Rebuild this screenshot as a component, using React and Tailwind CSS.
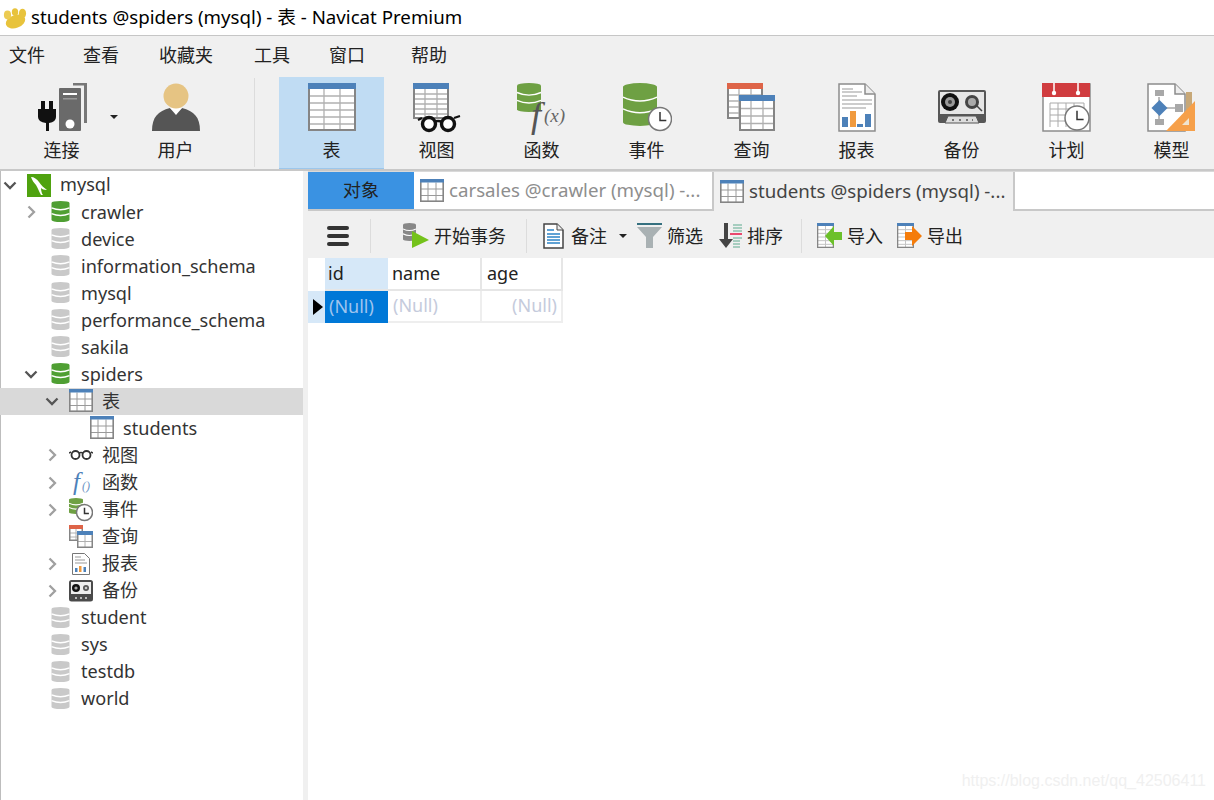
import React from "react";

const font = "font-['Noto_Sans','Noto_Sans_CJK_SC',sans-serif]";

// ---- icons ----
function Logo() {
  return (
    <svg width="25" height="22" viewBox="0 0 25 22">
      <ellipse cx="13.5" cy="14.5" rx="10" ry="6.5" fill="#e8c33c" transform="rotate(-20 13.5 14.5)" />
      <ellipse cx="5.5" cy="8" rx="3.6" ry="4.4" fill="#eccb52" />
      <ellipse cx="13" cy="5" rx="3.2" ry="3.8" fill="#e8c33c" />
      <ellipse cx="20.5" cy="6.5" rx="3.6" ry="4.8" fill="#e8c33c" />
    </svg>
  );
}

function TableGrid({ x = 0, y = 0, w = 48, h = 48, top = "#4d81b9", cols = 3, rows = 6, head = 5, line = "#b0b0b0", lw = 1.3, bw = 2 }) {
  const bodyTop = y + head + 1;
  const cells = [];
  for (let i = 1; i < cols; i++) {
    const lx = x + (w * i) / cols;
    cells.push(<line key={"c" + i} x1={lx} x2={lx} y1={bodyTop} y2={y + h} stroke={line} strokeWidth={lw} />);
  }
  for (let i = 1; i < rows; i++) {
    const ly = bodyTop + ((y + h - bodyTop) * i) / rows;
    cells.push(<line key={"r" + i} x1={x} x2={x + w} y1={ly} y2={ly} stroke={line} strokeWidth={lw} />);
  }
  return (
    <g>
      <rect x={x} y={y} width={w} height={h} fill="#fff" />
      {cells}
      <rect x={x + bw / 2} y={y + bw / 2} width={w - bw} height={h - bw} fill="none" stroke="#858585" strokeWidth={bw} />
      <rect x={x} y={y} width={w} height={head + 1} fill={top} />
    </g>
  );
}

function TableIcon() {
  return (
    <svg width="48" height="48" viewBox="0 0 48 48">
      <TableGrid head={5} />
    </svg>
  );
}

function ViewIcon() {
  return (
    <svg width="50" height="50" viewBox="0 0 50 50">
      <TableGrid x={1} w={36} h={36} />
      <path d="M6 37l4-2M42 35l6-2" stroke="#111" strokeWidth="2.2" fill="none" />
      <path d="M22 39q4-2 8 0" stroke="#111" strokeWidth="2.5" fill="none" />
      <circle cx="17" cy="41" r="6.5" fill="#fff" stroke="#111" strokeWidth="3.4" />
      <circle cx="36" cy="41" r="6.5" fill="#fff" stroke="#111" strokeWidth="3.4" />
    </svg>
  );
}

// stack of discs: one body with white curves between the bands
function Db({ x = 0, y = 0, w = 24, h = 28, color = "#6ea043", bands = 3, gap = 1.4 }) {
  const ry = Math.max(1.6, h * 0.09);
  const curves = [];
  for (let i = 1; i < bands; i++) {
    const by = y + ry + ((h - 2 * ry) * i) / bands - ry * 0.4;
    curves.push(
      <path key={i} d={`M${x} ${by}q${w / 2} ${ry * 2} ${w} 0`} fill="none" stroke="#fff" strokeWidth={gap} />
    );
  }
  return (
    <g>
      <path
        d={`M${x} ${y + ry}a${w / 2} ${ry} 0 0 1 ${w} 0v${h - 2 * ry}a${w / 2} ${ry} 0 0 1 -${w} 0z`}
        fill={color}
      />
      {curves}
    </g>
  );
}

function FuncIcon() {
  return (
    <svg width="50" height="50" viewBox="0 0 50 50" overflow="visible">
      <Db w={24} h={29} />
      <text x="14" y="44" fontFamily="Liberation Serif" fontStyle="italic" fontSize="36" fill="#555">f</text>
      <text x="27" y="39" fontFamily="Liberation Serif" fontStyle="italic" fontSize="19" fill="#666">(x)</text>
    </svg>
  );
}

function Clock({ cx, cy, r, sw = 1.5 }) {
  return (
    <g>
      <circle cx={cx} cy={cy} r={r} fill="#fff" stroke="#777" strokeWidth={sw} />
      <path d={`M${cx} ${cy - r * 0.6}V${cy + r * 0.12}H${cx + r * 0.55}`} fill="none" stroke="#333" strokeWidth={sw} />
    </g>
  );
}

function EventIcon() {
  return (
    <svg width="50" height="50" viewBox="0 0 50 50">
      <Db x={1} w={34} h={43} />
      <Clock cx={38} cy={36} r={11.5} />
    </svg>
  );
}

function QueryIcon() {
  return (
    <svg width="50" height="50" viewBox="0 0 50 50">
      <TableGrid w={36} h={36} top="#de6448" rows={5} />
      <TableGrid x={12} y={12} w={36} h={36} rows={4} />
    </svg>
  );
}

function ReportIcon() {
  return (
    <svg width="38" height="50" viewBox="0 0 38 50">
      <path d="M1 1h26l10 10v37H1z" fill="#fff" stroke="#8c8c8c" strokeWidth="1.5" />
      <path d="M27 1v10h10" fill="#eee" stroke="#8c8c8c" strokeWidth="1.5" />
      <path d="M4 6h11M4 9h20M4 13h15M4 17h30M4 21h30M4 25h24" stroke="#999" strokeWidth="1" />
      <rect x="4" y="34" width="6" height="10" fill="#4d81b9" />
      <rect x="12" y="28" width="6" height="16" fill="#f09a3e" />
      <rect x="19" y="41" width="6" height="3" fill="#4d81b9" />
      <rect x="27" y="31" width="6" height="13" fill="#4d81b9" />
    </svg>
  );
}

function BackupIcon() {
  return (
    <svg width="48" height="50" viewBox="0 0 48 50">
      <g transform="translate(0 7)">
        <rect x="0" y="0" width="48" height="33" rx="2" fill="#575757" />
        <rect x="2" y="2" width="44" height="22" fill="#e6e6e6" />
        <circle cx="12" cy="12" r="9" fill="#111" />
        <circle cx="12" cy="12" r="5" fill="#999" />
        <circle cx="12" cy="12" r="2" fill="#444" />
        <circle cx="34" cy="12" r="7" fill="#444" />
        <circle cx="34" cy="12" r="4" fill="#aaa" />
        <path d="M39 16l5 5" stroke="#444" strokeWidth="1.5" />
        <path d="M7 33l3-7h28l3 7z" fill="#ddd" stroke="#555" />
        <path d="M14 30h2M21 30h2M28 30h2M34 30h1" stroke="#555" strokeWidth="1.5" />
      </g>
    </svg>
  );
}

function BackupSmall() {
  return (
    <svg width="24" height="22" viewBox="0 0 24 22">
      <rect width="24" height="21.5" rx="2.5" fill="#4a4a4a" />
      <rect x="2" y="2" width="20" height="12" fill="#eee" />
      <circle cx="7" cy="8" r="4" fill="#111" />
      <circle cx="7" cy="8" r="1.6" fill="#aaa" />
      <circle cx="17" cy="8" r="3" fill="#555" />
      <circle cx="17" cy="8" r="1.3" fill="#ccc" />
      <path d="M6 18h2M11 18h2M16 18h2" stroke="#ddd" strokeWidth="1.4" />
    </svg>
  );
}

function ScheduleIcon() {
  return (
    <svg width="50" height="50" viewBox="0 0 50 50">
      <rect x="1" y="1" width="47" height="47" fill="#fff" stroke="#8c8c8c" strokeWidth="1.5" />
      <rect x="0" y="0" width="48" height="14" fill="#d03c3f" />
      <path d="M12 0v10M36 0v10" stroke="#fff" strokeWidth="1.5" />
      <circle cx="12" cy="10" r="2.2" fill="#fff" />
      <circle cx="36" cy="10" r="2.2" fill="#fff" />
      <path d="M8 20h34M8 26h34M8 32h34M8 38h34M8 20v24M16 20v24M24 20v24M32 20v24M42 20v14" stroke="#aaa" strokeWidth="1" />
      <Clock cx={35} cy={35} r={12} />
    </svg>
  );
}

function ModelIcon() {
  return (
    <svg width="50" height="50" viewBox="0 0 50 50">
      <path d="M1 1h27l10 10v37H1z" fill="#fff" stroke="#8c8c8c" strokeWidth="1.5" />
      <path d="M28 1v10h10" fill="#eee" stroke="#8c8c8c" strokeWidth="1.5" />
      <rect x="39" y="9" width="6" height="24" fill="#c7a878" />
      <path d="M12 14v24M18 25h12" stroke="#a8a8a8" strokeWidth="1.5" />
      <rect x="8" y="7" width="9" height="6" fill="#a8a8a8" />
      <rect x="8" y="36" width="9" height="6" fill="#a8a8a8" />
      <rect x="28" y="21" width="8" height="8" fill="#a8a8a8" />
      <path d="M12.5 17l8 8-8 8-8-8z" fill="#4d81b9" />
      <path d="M48 18v30H19z" fill="#f6a04a" />
      <path d="M42 35v7h-7z" fill="#f0e4cf" />
    </svg>
  );
}

function PlugServerIcon() {
  return (
    <svg width="50" height="50" viewBox="0 0 50 50">
      <path d="M36 0h14v40h-3V2.5H36z" fill="#777" />
      <rect x="22" y="5" width="22" height="43" rx="1" fill="#6a6a6a" />
      <rect x="26" y="10" width="14" height="2" fill="#fff" />
      <rect x="26" y="15" width="14" height="1.5" fill="#999" />
      <circle cx="33" cy="41" r="4.5" fill="#fff" />
      <path d="M4 18h4v8h4v-8h4v8h3v8q0 5-7 6v8h-3v-8q-8-1-8-6v-8h3z" fill="#111" />
    </svg>
  );
}

function UserIcon() {
  return (
    <svg width="50" height="50" viewBox="0 0 50 50">
      <path d="M1 48c0-14 6-20 18-23l6 5 6-5c12 3 18 9 18 23z" fill="#555" />
      <path d="M19 25h12l-6 7z" fill="#fff" />
      <circle cx="25" cy="13" r="12.5" fill="#e6c483" />
    </svg>
  );
}

function Chevron({ open, dark }) {
  return (
    <svg width="14" height="14" viewBox="0 0 14 14">
      <path
        d={open ? "M1.5 4.5l5.5 5.5 5.5-5.5" : "M4.5 1.5l5.5 5.5-5.5 5.5"}
        fill="none"
        stroke={dark ? "#555" : "#a0a0a0"}
        strokeWidth="2.3"
      />
    </svg>
  );
}

function DbSmall({ on }) {
  return (
    <svg width="19" height="22" viewBox="0 0 19 22">
      <Db w={18} h={21} x={0.5} color={on ? "#4f9f33" : "#c9c9c9"} gap={1.5} />
    </svg>
  );
}

function MysqlIcon() {
  return (
    <svg width="24" height="23" viewBox="0 0 24 23">
      <rect width="24" height="23" fill="#4fa20f" />
      <path d="M4 3c3 0 6 2 8 5 2 3 5 6 8 8-3 0-5-1-6-2 0 3 1 6 2 7h-2c-2-3-3-7-5-10-2-2-4-5-5-8z" fill="#fff" />
    </svg>
  );
}

function TableSmall() {
  return (
    <svg width="24" height="24" viewBox="0 0 24 24">
      <TableGrid w={24} h={23} head={2.5} rows={3} cols={3} line="#9a9a9a" lw={1} bw={1.6} top="#4d81b9" />
    </svg>
  );
}

function GlassesSmall() {
  return (
    <svg width="24" height="12" viewBox="0 0 24 12">
      <path d="M0 4l2-1M22 3l2 1M10 4q2-1 4 0" stroke="#333" strokeWidth="1.5" fill="none" />
      <circle cx="6.5" cy="6" r="4" fill="#fff" stroke="#333" strokeWidth="1.8" />
      <circle cx="17.5" cy="6" r="4" fill="#fff" stroke="#333" strokeWidth="1.8" />
    </svg>
  );
}

function FuncSmall() {
  return (
    <svg width="24" height="26" viewBox="0 0 24 26" overflow="visible">
      <text x="4" y="20" fontFamily="Liberation Serif" fontStyle="italic" fontSize="25" fill="#4d81b9">f</text>
      <text x="13" y="20" fontFamily="Liberation Serif" fontStyle="italic" fontSize="12" fill="#6a94c4">()</text>
    </svg>
  );
}

function EventSmall() {
  return (
    <svg width="24" height="24" viewBox="0 0 24 24">
      <Db w={14} h={16} x={0} color="#6ea043" gap={1.1} />
      <Clock cx={15.5} cy={14.5} r={8} sw={1.5} />
    </svg>
  );
}

function QuerySmall() {
  return (
    <svg width="24" height="24" viewBox="0 0 24 24">
      <TableGrid w={14} h={16} top="#de6448" cols={2} rows={3} head={3} lw={1} bw={1.5} />
      <TableGrid x={8} y={6} w={16} h={17} cols={2} rows={2} head={3} lw={1} bw={1.5} />
    </svg>
  );
}

function ReportSmall() {
  return (
    <svg width="24" height="22" viewBox="0 0 24 22">
      <path d="M3.5.5h12l5 5v16h-17z" fill="#fff" stroke="#777" />
      <path d="M6 4h6M6 7h10M6 10h12" stroke="#999" />
      <rect x="6" y="15" width="2.5" height="4" fill="#4d81b9" />
      <rect x="10" y="13" width="2.5" height="6" fill="#f09a3e" />
      <rect x="14.5" y="14" width="2.5" height="5" fill="#4d81b9" />
    </svg>
  );
}

function BookIcon() {
  return (
    <svg width="21" height="26" viewBox="0 0 21 26">
      <path d="M1 1h13l6 6v18H1z" fill="#fff" stroke="#444" strokeWidth="1.5" />
      <path d="M14 1v6h6" fill="#eee" stroke="#444" />
      <path d="M4 7h7M4 11h13M4 14h13M4 17h13M4 20h13" stroke="#2c84c6" strokeWidth="1.5" />
    </svg>
  );
}

function FilterIcon() {
  return (
    <svg width="26" height="26" viewBox="0 0 26 26">
      <rect x="0" y="0" width="25" height="2" fill="#35707f" />
      <path d="M0 4h25l-9 10v11h-7V14z" fill="#a9b1b3" />
    </svg>
  );
}

function SortIcon() {
  return (
    <svg width="25" height="26" viewBox="0 0 25 26">
      <path d="M6 0h4v16h5l-7 9-7-9h5z" fill="#444" />
      <path d="M15 2h9M15 5h9M15 8h9M15 15h9M15 18h7M15 21h7M15 24h7" stroke="#8dc1ae" strokeWidth="1.3" />
      <path d="M12 11h12" stroke="#e8375f" strokeWidth="1.8" />
    </svg>
  );
}

function TxIcon() {
  return (
    <svg width="26" height="26" viewBox="0 0 26 26">
      <Db w={13} h={18} x={0} color="#888" gap={1.1} />
      <path d="M9 8l17 9-17 8z" fill="#74c21b" />
    </svg>
  );
}

function TransferIcon({ color, left }) {
  return (
    <svg width="26" height="26" viewBox="0 0 26 26">
      <TableGrid w={17} h={25} cols={2} rows={6} head={2} line="#c4c4c4" lw={1} bw={1.3} />
      <path
        d={left ? "M25 9h-8V3L8 13l9 10v-6h8z" : "M8 9h7V3l10 10-10 10v-6H8z"}
        fill={color}
      />
    </svg>
  );
}

// ---- data ----
const menus = [
  ["文件", "w-[74px]"],
  ["查看", "w-[76px]"],
  ["收藏夹", "w-[95px]"],
  ["工具", "w-[75px]"],
  ["窗口", "w-[82px]"],
  ["帮助", "w-[60px]"],
];

const tools = [
  ["表", <TableIcon />, true],
  ["视图", <ViewIcon />],
  ["函数", <FuncIcon />],
  ["事件", <EventIcon />],
  ["查询", <QueryIcon />],
  ["报表", <ReportIcon />],
  ["备份", <BackupIcon />],
  ["计划", <ScheduleIcon />],
  ["模型", <ModelIcon />],
];

const indent = ["pl-0", "pl-[21px]", "pl-[42px]", "pl-[63px]"];

const tree = [
  { t: "mysql", l: 0, c: "open", i: <MysqlIcon /> },
  { t: "crawler", l: 1, c: "closed", i: <DbSmall on /> },
  { t: "device", l: 1, i: <DbSmall /> },
  { t: "information_schema", l: 1, i: <DbSmall /> },
  { t: "mysql", l: 1, i: <DbSmall /> },
  { t: "performance_schema", l: 1, i: <DbSmall /> },
  { t: "sakila", l: 1, i: <DbSmall /> },
  { t: "spiders", l: 1, c: "open", i: <DbSmall on /> },
  { t: "表", l: 2, c: "open", i: <TableSmall />, sel: true },
  { t: "students", l: 3, i: <TableSmall /> },
  { t: "视图", l: 2, c: "closed", i: <GlassesSmall /> },
  { t: "函数", l: 2, c: "closed", i: <FuncSmall /> },
  { t: "事件", l: 2, c: "closed", i: <EventSmall /> },
  { t: "查询", l: 2, i: <QuerySmall /> },
  { t: "报表", l: 2, c: "closed", i: <ReportSmall /> },
  { t: "备份", l: 2, c: "closed", i: <BackupSmall /> },
  { t: "student", l: 1, i: <DbSmall /> },
  { t: "sys", l: 1, i: <DbSmall /> },
  { t: "testdb", l: 1, i: <DbSmall /> },
  { t: "world", l: 1, i: <DbSmall /> },
];

function ToolButton({ label, icon, active }) {
  return (
    <div
      className={
        "w-[105px] h-[92px] flex flex-col items-center shrink-0 " +
        (active ? "bg-[#c0dcf3] border-b border-[#9cc7ec]" : "")
      }
    >
      <div className="h-[52px] mt-[6px] flex items-start justify-center">{icon}</div>
      <span className="text-[18px] leading-6 mt-[3px] text-[#222]">{label}</span>
    </div>
  );
}

function ObjAction({ icon, label, className }) {
  return (
    <div className={"flex items-center shrink-0 " + className}>
      {icon}
      <span className="text-[18px] text-[#222] leading-6">{label}</span>
    </div>
  );
}

export default function App() {
  return (
    <div className={"h-[800px] w-full overflow-hidden bg-white flex flex-col relative " + font}>
      {/* title bar */}
      <div className="h-[35px] shrink-0 flex items-center pl-[2px]">
        <Logo />
        <span className="ml-[4px] text-[18.7px] text-black whitespace-nowrap">
          students @spiders (mysql) - 表 - Navicat Premium
        </span>
      </div>

      {/* menu */}
      <div className="h-[35px] shrink-0 bg-[#f0f0f0] border-t border-[#c6c6c6] flex items-center pl-[9px] pt-[5px]">
        {menus.map(([m, w]) => (
          <span key={m} className={"text-[18px] text-[#222] " + w}>
            {m}
          </span>
        ))}
      </div>

      {/* toolbar */}
      <div className="h-[101px] shrink-0 bg-[#f0f0f0] border-b-2 border-[#c8c8c8] flex pt-[7px]">
        <div className="w-[123px] shrink-0 flex relative">
          <div className="ml-[9px] w-[105px] h-[92px] flex flex-col items-center">
            <div className="h-[52px] mt-[6px]">
              <PlugServerIcon />
            </div>
            <span className="text-[18px] leading-6 mt-[3px] text-[#222]">连接</span>
          </div>
          <span className="absolute left-[110px] top-[38px] w-0 h-0 border-x-4 border-x-transparent border-t-4 border-t-[#222]" />
        </div>
        <div className="w-[105px] shrink-0 h-[92px] flex flex-col items-center">
          <div className="h-[52px] mt-[6px]">
            <UserIcon />
          </div>
          <span className="text-[18px] leading-6 mt-[3px] text-[#222]">用户</span>
        </div>
        <div className="ml-[26px] mr-[24px] w-px h-[89px] mt-px bg-[#dcdcdc] shrink-0" />
        {tools.map(([label, icon, active]) => (
          <ToolButton key={label} label={label} icon={icon} active={active} />
        ))}
      </div>

      {/* body */}
      <div className="flex-1 flex min-h-0">
        {/* tree */}
        <div className="w-[303px] shrink-0 border-l border-[#bdbdbd] pt-[0.5px]">
          {tree.map((n, i) => (
            <div
              key={i}
              className={
                "h-[27.05px] flex items-center -ml-px " + indent[n.l] + (n.sel ? " bg-[#d9d9d9]" : "")
              }
            >
              <div className="w-[27px] shrink-0 flex justify-center pr-[7px]">
                {n.c ? <Chevron open={n.c === "open"} dark={n.c === "open"} /> : null}
              </div>
              <div className="w-6 shrink-0 flex justify-center">{n.i}</div>
              <span className="ml-[9px] text-[18.1px] text-[#333] whitespace-nowrap">{n.t}</span>
            </div>
          ))}
        </div>
        <div className="w-[5px] shrink-0 bg-[#f0f0f0]" />

        {/* main */}
        <div className="flex-1 min-w-0 flex flex-col">
          {/* tabs */}
          <div className="h-[40px] shrink-0 flex border-t border-[#d9d9d9]">
            <div className="w-[106px] shrink-0 bg-[#3a92e2] border-b-2 border-[#c8c8c8] flex items-center justify-center text-[18px] text-[#222]">
              对象
            </div>
            <div className="w-[300px] shrink-0 bg-white border-b-2 border-r-2 border-[#c8c8c8] flex items-center pl-[6px]">
              <TableSmall />
              <span className="ml-[5px] text-[18.7px] text-[#8e8e8e] whitespace-nowrap">
                carsales @crawler (mysql) -...
              </span>
            </div>
            <div className="w-[299px] shrink-0 bg-[#f0f0f0] flex items-center pl-[6px]">
              <TableSmall />
              <span className="ml-[5px] text-[18.7px] text-[#444] whitespace-nowrap">
                students @spiders (mysql) -...
              </span>
            </div>
            <div className="flex-1 bg-white border-b-2 border-l-2 border-[#c8c8c8]" />
          </div>

          {/* object toolbar */}
          <div className="h-[47px] shrink-0 bg-[#f0f0f0] flex items-center pt-[3px]">
            <div className="ml-[19px] w-[22px] flex flex-col gap-[4px] shrink-0">
              <span className="h-[4px] rounded-[2px] bg-[#333]" />
              <span className="h-[4px] rounded-[2px] bg-[#333]" />
              <span className="h-[4px] rounded-[2px] bg-[#333]" />
            </div>
            <div className="ml-[21px] w-px h-[34px] bg-[#dcdcdc] shrink-0" />
            <ObjAction className="ml-[32px] gap-[5px]" icon={<TxIcon />} label="开始事务" />
            <div className="ml-[20px] w-px h-[34px] bg-[#dcdcdc] shrink-0" />
            <ObjAction className="ml-[16px] gap-[7px]" icon={<BookIcon />} label="备注" />
            <span className="ml-[12px] w-0 h-0 shrink-0 border-x-4 border-x-transparent border-t-4 border-t-[#222]" />
            <ObjAction className="ml-[10px] gap-[4px]" icon={<FilterIcon />} label="筛选" />
            <ObjAction className="ml-[15px] gap-[4px]" icon={<SortIcon />} label="排序" />
            <div className="ml-[18px] w-px h-[34px] bg-[#dcdcdc] shrink-0" />
            <ObjAction className="ml-[15px] gap-[4px]" icon={<TransferIcon color="#6cc02a" left />} label="导入" />
            <ObjAction className="ml-[14px] gap-[4px]" icon={<TransferIcon color="#f57c0a" />} label="导出" />
          </div>

          {/* data grid */}
          <div className="grid grid-cols-[17px_63px_94px_81px] grid-rows-[33px_32px] w-fit text-[18px]">
            <div className="bg-white" />
            <div className="bg-[#d6e8f8] border-b-2 border-[#e6e6e6] pl-[3px] flex items-center text-[#222]">id</div>
            <div className="border-b-2 border-r-2 border-[#e6e6e6] pl-[4px] flex items-center text-[#222]">name</div>
            <div className="border-b-2 border-r-2 border-[#e6e6e6] pl-[5px] flex items-center text-[#222]">age</div>
            <div className="bg-[#d6e8f8] flex items-center pl-[5px]">
              <span className="w-0 h-0 border-y-[8px] border-y-transparent border-l-[10px] border-l-black" />
            </div>
            <div className="bg-[#0078d7] flex items-center pl-[4px] pb-[2px] text-[#9fc4ee]">(Null)</div>
            <div className="border-b-2 border-r-2 border-[#eeeeee] pl-[5px] pb-[2px] flex items-center text-[#c5cbdc]">(Null)</div>
            <div className="border-b-2 border-r-2 border-[#eeeeee] pr-[4px] pb-[2px] flex items-center justify-end text-[#c5cbdc]">(Null)</div>
          </div>
        </div>
      </div>

      {/* csdn watermark over the image */}
      <span className="absolute right-[8px] bottom-[7px] font-['Liberation_Sans',sans-serif] text-[16px] text-[#f0f0f0]">
        https://blog.csdn.net/qq_42506411
      </span>
    </div>
  );
}
